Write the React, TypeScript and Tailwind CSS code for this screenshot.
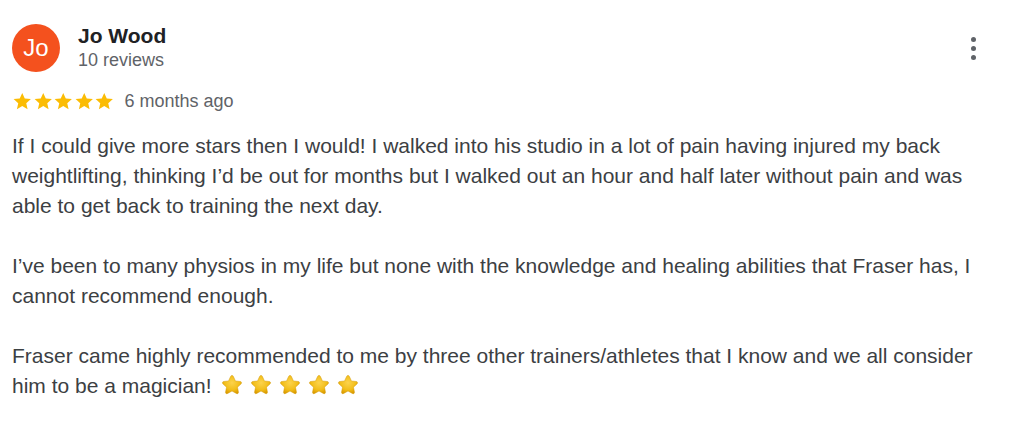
import React from "react";

const Star = ({className}: {className?: string}) => (
    <svg viewBox="0 0 24 24" className={className} fill="currentColor">
        <path d="M12 2.2l2.95 6.55 7.15.7-5.4 4.8 1.55 7.05L12 17.65 5.75 21.3l1.55-7.05-5.4-4.8 7.15-.7z"/>
    </svg>
)

const EmojiStar = ({first}: {first?: boolean}) => (
    <svg viewBox="0 0 32 32" className={first ? "w-[24px] h-[24px] inline-block align-[-4px] mr-[5px] ml-[3px]" : "w-[24px] h-[24px] inline-block align-[-4px] mr-[5px]"}>
        <defs>
            <radialGradient id="eg" cx="50%" cy="40%" r="60%">
                <stop offset="0%" stopColor="#fcd34d"/>
                <stop offset="65%" stopColor="#f2be1a"/>
                <stop offset="100%" stopColor="#dc9c00"/>
            </radialGradient>
        </defs>
        <path
            d="M16 3.2c.9 0 1.5.6 1.9 1.5l2.7 5.9 6.3.7c1.9.2 2.5 2 1.1 3.3l-4.7 4.3 1.3 6.3c.4 1.9-1.2 3-2.8 2.1L16 24.1l-5.8 3.2c-1.6.9-3.2-.2-2.8-2.1l1.3-6.3-4.7-4.3c-1.4-1.3-.8-3.1 1.1-3.3l6.3-.7 2.7-5.9c.4-.9 1-1.5 1.9-1.5z"
            fill="url(#eg)" stroke="#cf9300" strokeWidth="0.6"/>
    </svg>
)

export default function App() {
    return (
        <div className="w-[1012px] h-[424px] bg-white font-['Liberation_Sans',Arial,sans-serif] px-3 pt-6">
            <div className="flex items-start">
                <div className="w-12 h-12 rounded-full bg-[#f4511e] flex items-center justify-center text-white text-[24px] shrink-0">
                    Jo
                </div>
                <div className="ml-[18px] flex-1">
                    <div className="text-[21px] font-bold text-[#202124] leading-6">Jo Wood</div>
                    <div className="text-[18px] text-[#5f6368] leading-5 mt-[2px]">10 reviews</div>
                </div>
                <button className="mt-[13px] mr-[24px] flex flex-col items-center gap-[4px]">
                    <span className="w-[5px] h-[5px] rounded-full bg-[#5f6368]"></span>
                    <span className="w-[5px] h-[5px] rounded-full bg-[#5f6368]"></span>
                    <span className="w-[5px] h-[5px] rounded-full bg-[#5f6368]"></span>
                </button>
            </div>
            <div className="flex items-center mt-[16px]">
                <div className="flex text-[#fbbc04]">
                    <Star className="w-[20.5px] h-[20.5px]"/>
                    <Star className="w-[20.5px] h-[20.5px]"/>
                    <Star className="w-[20.5px] h-[20.5px]"/>
                    <Star className="w-[20.5px] h-[20.5px]"/>
                    <Star className="w-[20.5px] h-[20.5px]"/>
                </div>
                <span className="ml-[10px] text-[18px] text-[#5f6368]">6 months ago</span>
            </div>
            <div className="mt-[16px] text-[21px] leading-[30px] text-[#3c4043]">
                <p>If I could give more stars then I would! I walked into his studio in a lot of pain having injured my back weightlifting, thinking I’d be out for months but I walked out an hour and half later without pain and was able to get back to training the next day.</p>
                <br/>
                <p>I’ve been to many physios in my life but none with the knowledge and healing abilities that Fraser has, I cannot recommend enough.</p>
                <br/>
                <p>
                    Fraser came highly recommended to me by three other trainers/athletes that I know and we all consider him to be a magician!{" "}
                    <EmojiStar first/><EmojiStar/><EmojiStar/><EmojiStar/><EmojiStar/>
                </p>
            </div>
        </div>
    )
}
